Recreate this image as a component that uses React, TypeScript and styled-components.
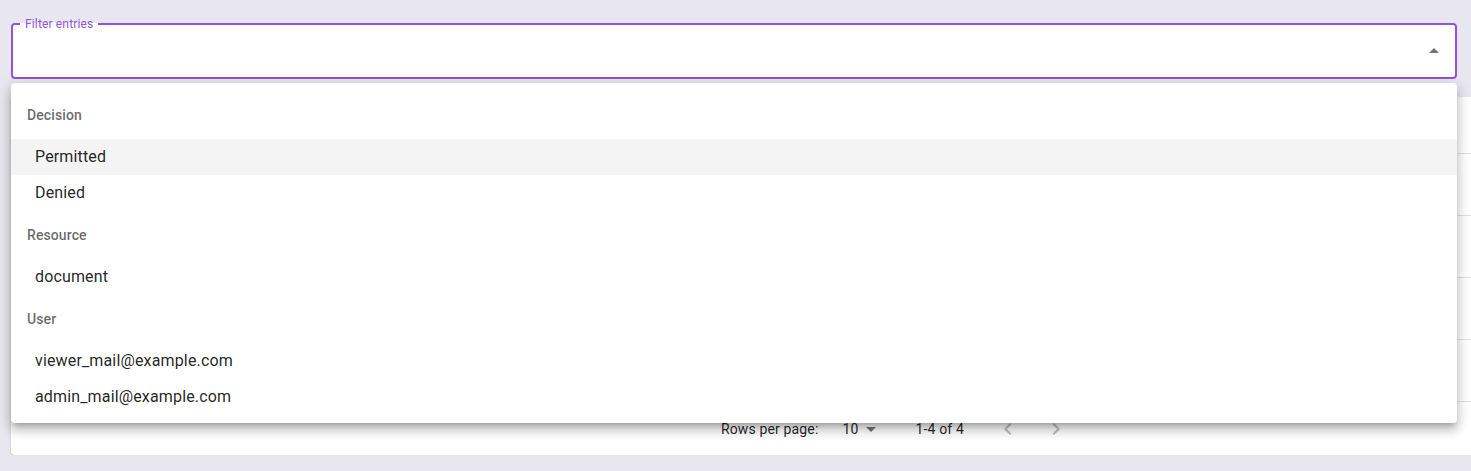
import React from "react";
import styled, { createGlobalStyle } from "styled-components";

const Global = createGlobalStyle`
  html, body { margin: 0; padding: 0; }
  body {
    background: #e8e6ee;
    font-family: Roboto, "Liberation Sans", sans-serif;
    overflow: hidden;
    color: rgba(0,0,0,0.87);
  }
`;

const PURPLE = "#9152e0";

const Page = styled.div`
  padding: 17px 14px 0 11px;
  display: flex;
  flex-direction: column;
`;

const FieldRoot = styled.div`
  position: relative;
`;

const Fieldset = styled.fieldset`
  box-sizing: border-box;
  margin: 0;
  height: 62px;
  padding: 0 9px 0 7px;
  border: 2px solid ${PURPLE};
  border-radius: 4px;
  background: #fff;
  display: flex;
  align-items: center;
`;

const Legend = styled.legend`
  font-size: 12px;
  line-height: 14px;
  padding: 0 5px;
  color: ${PURPLE};
  letter-spacing: 0.15px;
`;

const Input = styled.input`
  flex: 1;
  border: none;
  outline: none;
  background: transparent;
  font: inherit;
  font-size: 16px;
  padding: 0 7px;
  margin-top: -6px;
`;

const IconSlot = styled.span`
  width: 24px;
  height: 24px;
  display: flex;
  margin-top: -6px;
  color: #757575;
`;

const Popup = styled.div`
  position: absolute;
  top: calc(100% + 4px);
  left: 0;
  right: 0;
  z-index: 10;
  background: #fff;
  border-radius: 4px;
  box-shadow: 0 5px 5px -3px rgba(0,0,0,0.2), 0 8px 10px 1px rgba(0,0,0,0.14), 0 3px 14px 2px rgba(0,0,0,0.12);
  padding: 8px 0;
`;

const GroupHeader = styled.div`
  height: 48px;
  line-height: 48px;
  padding-left: 16px;
  font-size: 14px;
  font-weight: 500;
  color: rgba(0,0,0,0.6);
  letter-spacing: 0.1px;
`;

const Option = styled.div<{ $active?: boolean }>`
  height: 36px;
  line-height: 36px;
  padding-left: 24px;
  font-size: 16px;
  letter-spacing: 0.15px;
  color: rgba(0,0,0,0.87);
  background: ${(p) => (p.$active ? "#f4f4f4" : "transparent")};
`;

const Card = styled.div`
  margin-top: 18px;
  width: 1070px;
  background: #fff;
  border-radius: 4px;
  box-shadow: 0 2px 1px -1px rgba(0,0,0,0.2), 0 1px 1px 0 rgba(0,0,0,0.14), 0 1px 3px 0 rgba(0,0,0,0.12);
`;

const Inner = styled.div`
  width: 1480px;
  background: #fff;
  border-radius: 4px 0 0 4px;
`;

const Row = styled.div<{ $head?: boolean }>`
  box-sizing: border-box;
  height: ${(p) => (p.$head ? 57 : 62)}px;
  border-bottom: 1px solid #e0e0e0;
`;

const Footer = styled.div`
  height: 53px;
`;

const Pagination = styled.div`
  width: 1070px;
  height: 53px;
  box-sizing: border-box;
  display: flex;
  align-items: center;
  justify-content: flex-end;
  padding-right: 5px;
  font-size: 14px;
  letter-spacing: 0.15px;
  color: rgba(0,0,0,0.87);
`;

const RowsLabel = styled.span`
  margin-right: 24px;
`;

const SelectBox = styled.span`
  display: flex;
  align-items: center;
  margin-right: 33px;
  color: rgba(0,0,0,0.87);
`;

const Small = styled.span`
  display: flex;
  width: 24px;
  height: 24px;
  color: #757575;
`;

const Range = styled.span`
  margin-right: 24px;
`;

const NavButton = styled.span`
  width: 40px;
  height: 40px;
  display: flex;
  align-items: center;
  justify-content: center;
  color: rgba(0,0,0,0.26);
  & + & { margin-left: 8px; }
`;

const ArrowUp = () => (
  <svg width="24" height="24" viewBox="0 0 24 24" fill="currentColor">
    <path d="m7 14 5-5 5 5z" />
  </svg>
);
const ArrowDown = () => (
  <svg width="24" height="24" viewBox="0 0 24 24" fill="currentColor">
    <path d="m7 10 5 5 5-5z" />
  </svg>
);
const ChevronLeft = () => (
  <svg width="24" height="24" viewBox="0 0 24 24" fill="currentColor">
    <path d="M15.41 7.41 14 6l-6 6 6 6 1.41-1.41L10.83 12z" />
  </svg>
);
const ChevronRight = () => (
  <svg width="24" height="24" viewBox="0 0 24 24" fill="currentColor">
    <path d="M10 6 8.59 7.41 13.17 12l-4.58 4.59L10 18l6-6z" />
  </svg>
);

const groups = [
  { name: "Decision", options: ["Permitted", "Denied"] },
  { name: "Resource", options: ["document"] },
  { name: "User", options: ["viewer_mail@example.com", "admin_mail@example.com"] },
];

export default function App() {
  return (
    <>
      <Global />
      <Page>
        <FieldRoot>
          <Fieldset>
            <Legend>Filter entries</Legend>
            <Input aria-label="Filter entries" />
            <IconSlot>
              <ArrowUp />
            </IconSlot>
          </Fieldset>
          <Popup role="listbox">
            {groups.map((g) => (
              <div key={g.name}>
                <GroupHeader>{g.name}</GroupHeader>
                {g.options.map((o) => (
                  <Option key={o} $active={o === "Permitted"}>
                    {o}
                  </Option>
                ))}
              </div>
            ))}
          </Popup>
        </FieldRoot>
        <Card>
          <Inner>
            <Row $head />
            <Row />
            <Row />
            <Row />
            <Row />
            <Footer>
              <Pagination>
                <RowsLabel>Rows per page:</RowsLabel>
                <SelectBox>
                  <span>10</span>
                  <Small>
                    <ArrowDown />
                  </Small>
                </SelectBox>
                <Range>1-4 of 4</Range>
                <NavButton>
                  <ChevronLeft />
                </NavButton>
                <NavButton>
                  <ChevronRight />
                </NavButton>
              </Pagination>
            </Footer>
          </Inner>
        </Card>
      </Page>
    </>
  );
}
